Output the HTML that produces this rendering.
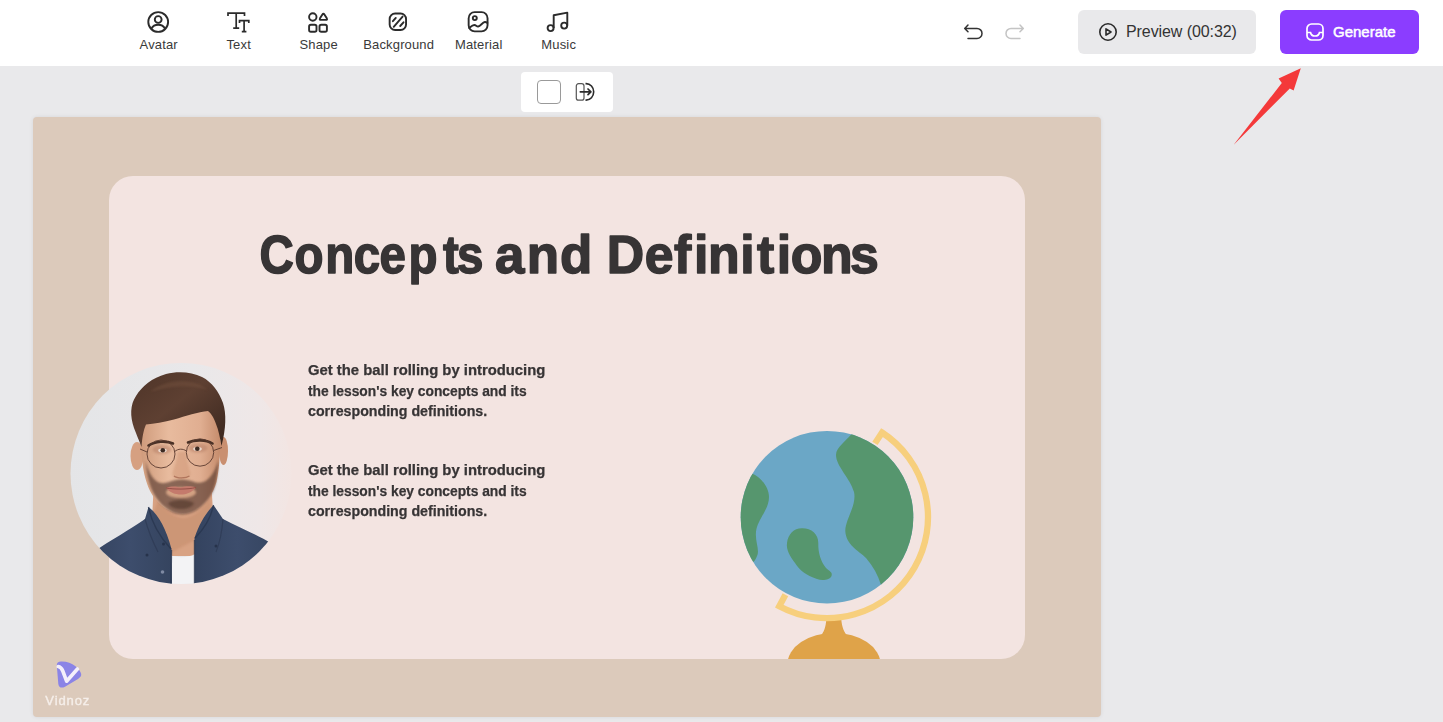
<!DOCTYPE html>
<html lang="en">
<head>
<meta charset="utf-8">
<title>Vidnoz Editor</title>
<style>
html,body{margin:0;padding:0;}
body{width:1443px;height:722px;overflow:hidden;background:#e9e9eb;font-family:"Liberation Sans",sans-serif;position:relative;color:#333;}
.abs{position:absolute;}
#topbar{left:0;top:0;width:1443px;height:66px;background:#fff;}
.tool{position:absolute;top:0;width:80px;height:66px;text-align:center;}
.tool svg{position:absolute;left:28px;top:10px;width:24px;height:24px;}
.tool span{position:absolute;left:-9.3px;width:100px;top:37px;font-size:13px;line-height:15px;color:#3a3a3a;text-align:center;letter-spacing:0.15px;}
#preview{left:1078px;top:10px;width:178px;height:44px;border-radius:6px;background:#e9e9eb;}
#preview span{position:absolute;left:48px;top:11px;font-size:16px;line-height:22px;color:#333;white-space:nowrap;letter-spacing:-0.08px;}
#generate{left:1280px;top:10px;width:139px;height:44px;border-radius:6px;background:#8b3dff;}
#generate span{position:absolute;left:53px;top:11px;font-size:15px;line-height:22px;color:#fff;white-space:nowrap;-webkit-text-stroke:0.5px #fff;}
#popup{left:521px;top:72px;width:92px;height:40px;border-radius:4px;background:#fff;}
#sq{left:16px;top:8px;width:22px;height:22px;border:1px solid #9a9a9a;border-radius:4px;background:#fff;}
#canvas{left:33px;top:117px;width:1068px;height:600px;border-radius:4px;background:#dccabb;box-shadow:0 0 4px rgba(0,0,0,0.08);overflow:hidden;}
#card{left:76px;top:59px;width:916px;height:483px;border-radius:24px;background:#f3e4e1;}
.ttl{font-family:"Liberation Sans",sans-serif;font-weight:bold;font-size:54px;fill:#373435;stroke:#373435;stroke-width:1.5px;stroke-linejoin:round;}
.pl{left:275px;font-weight:bold;font-size:14px;line-height:18px;color:#373435;white-space:nowrap;transform-origin:0 0;-webkit-text-stroke:0.25px #373435;}
</style>
</head>
<body>
<div id="topbar" class="abs">
  <div class="tool" style="left:118px"><svg viewBox="0 0 24 24" fill="none" stroke="#2b2b2b" stroke-width="1.900"><circle cx="12.200" cy="12" r="9.900"/><circle cx="12.200" cy="9.500" r="3.400"/><path d="M5.300 18.700c1.500-2.700 3.900-3.900 6.900-3.900s5.400 1.200 6.900 3.900"/></svg><span>Avatar</span></div>
  <div class="tool" style="left:198px"><svg viewBox="0 0 24 24" fill="none" stroke="#2b2b2b" stroke-width="1.700"><path d="M2 6V3.200h16.500V6M10.200 3.200v15M7.200 18.200h6M13.500 13V10.700h9.300V13M18.100 10.700v11M15.800 21.700h4.600"/></svg><span>Text</span></div>
  <div class="tool" style="left:278px"><svg viewBox="0 0 24 24" fill="none" stroke="#2b2b2b" stroke-width="1.900"><circle cx="6.800" cy="7" r="3.700"/><path d="M16.400 4.500Q17.400 2.900 18.400 4.500L20.800 8.300Q21.600 9.900 19.900 9.900L14.900 9.900Q13.200 9.900 14 8.300Z" stroke-linejoin="round"/><rect x="3.100" y="14.800" width="7.400" height="7" rx="1.800"/><rect x="13.500" y="14.800" width="7.400" height="7" rx="1.800"/></svg><span>Shape</span></div>
  <div class="tool" style="left:358px"><svg viewBox="0 0 24 24" fill="none" stroke="#2b2b2b" stroke-width="1.900"><rect x="3.650" y="3.450" width="16.400" height="16.600" rx="5.500"/><path d="M6.900 11.200L9.800 7.900M7.700 16.800L16.600 6.600M14.200 16L17.500 12.300" stroke-linecap="round" stroke-width="1.900"/></svg><span>Background</span></div>
  <div class="tool" style="left:438px"><svg viewBox="0 0 24 24" fill="none" stroke="#2b2b2b" stroke-width="1.900"><rect x="2.650" y="2.150" width="18.900" height="19.200" rx="6"/><circle cx="8.800" cy="8.100" r="2"/><path d="M3.200 18C5 16.500 7 14.600 8.600 15C10 15.300 10.800 16.700 12.200 16.500C14.500 16.200 16.500 12.300 18.800 12C19.800 11.900 20.600 12.300 21.400 12.900" stroke-linecap="round"/></svg><span>Material</span></div>
  <div class="tool" style="left:518px"><svg viewBox="0 0 24 24" fill="none" stroke="#2b2b2b" stroke-width="1.900"><circle cx="4.600" cy="18.100" r="3"/><circle cx="18.200" cy="15.600" r="3"/><path d="M7.700 18.100V5.200l13.600-2.600v13" stroke-linejoin="round"/></svg><span>Music</span></div>

  <svg class="abs" style="left:962px;top:20px;width:24px;height:24px" viewBox="0 0 24 24" fill="none" stroke="#333" stroke-width="1.500" stroke-linecap="round" stroke-linejoin="round"><path d="M6 5L2.700 8.400l3.300 3.400M2.700 8.400H15a5 5 0 0 1 0 10H6"/></svg>
  <svg class="abs" style="left:1002px;top:20px;width:24px;height:24px" viewBox="0 0 24 24" fill="none" stroke="#c4c4c4" stroke-width="1.500" stroke-linecap="round" stroke-linejoin="round"><path d="M18 5L21.300 8.400l-3.300 3.400M21.300 8.400H9a5 5 0 0 0 0 10h9"/></svg>

  <div id="preview" class="abs"><svg class="abs" style="left:20px;top:12px;width:20px;height:20px" viewBox="0 0 20 20" fill="none" stroke="#2b2b2b" stroke-width="1.600"><circle cx="10" cy="10" r="8.200"/><path d="M8 6.800v6.400l5-3.200z" stroke-linejoin="round"/></svg><span>Preview (00:32)</span></div>
  <div id="generate" class="abs"><svg class="abs" style="left:26px;top:13px;width:18px;height:18px" viewBox="0 0 18 18" fill="none" stroke="#fff" stroke-width="1.700"><rect x="1" y="1" width="16" height="16" rx="4.500"/><path d="M1 9.500h3.500c.5 2.500 2 3.500 4.500 3.500s4-1 4.500-3.500H17"/></svg><span>Generate</span></div>
</div>

<svg class="abs" style="left:1220px;top:60px;width:100px;height:100px" viewBox="1220 60 100 100"><path d="M1300.800 68.300L1278.600 78.400L1281.800 83L1233.500 145L1289.800 88.400L1293.600 90.600Z" fill="#f4393a"/></svg>

<div id="popup" class="abs">
  <div id="sq" class="abs"></div>
  <svg class="abs" style="left:52px;top:8px;width:24px;height:24px" viewBox="0 0 24 24" fill="none" stroke="#2b2b2b" stroke-width="1.500"><rect x="3.300" y="3.700" width="7.700" height="16.500" rx="2.300" stroke="#555" stroke-width="1.200"/><path d="M12.500 3.600h.6a7.600 8.250 0 0 1 0 16.500h-.6" stroke-width="1.600"/><path d="M7.300 11.850h10M15 9l2.900 2.850-2.900 2.850" stroke-width="1.700" stroke-linecap="round" stroke-linejoin="round"/></svg>
</div>

<div id="canvas" class="abs">
  <div id="card" class="abs"></div>
  <div class="pl abs" id="p1" style="top:244.3px;transform:scaleX(1.0595)">Get the ball rolling by introducing</div>
  <div class="pl abs" id="p2" style="top:264.8px;transform:scaleX(0.985)">the lesson's key concepts and its</div>
  <div class="pl abs" id="p3" style="top:285.2px;transform:scaleX(1.015)">corresponding definitions.</div>
  <div class="pl abs" id="p4" style="top:344.3px;transform:scaleX(1.0595)">Get the ball rolling by introducing</div>
  <div class="pl abs" id="p5" style="top:364.8px;transform:scaleX(0.985)">the lesson's key concepts and its</div>
  <div class="pl abs" id="p6" style="top:385.2px;transform:scaleX(1.015)">corresponding definitions.</div>
<svg class="abs" style="left:0;top:0;width:1068px;height:600px" viewBox="33 117 1068 600">
<defs>
<clipPath id="av"><circle cx="181" cy="473.5" r="110.5"/></clipPath>
<clipPath id="gl"><circle cx="827" cy="517.2" r="86.3"/></clipPath>
<clipPath id="cc"><rect x="109" y="176" width="916" height="483" rx="24"/></clipPath>
<linearGradient id="avbg" x1="0" x2="1" y1="0" y2="0"><stop offset="0" stop-color="#e4e5e7"/><stop offset="0.55" stop-color="#e9e8ea"/><stop offset="0.85" stop-color="#efe7e7"/><stop offset="1" stop-color="#f3e5e2"/></linearGradient>
<linearGradient id="hair" x1="0" x2="1" y1="0" y2="1"><stop offset="0" stop-color="#4e3428"/><stop offset="0.45" stop-color="#5e4032"/><stop offset="1" stop-color="#38251d"/></linearGradient>
<linearGradient id="skin" x1="0" x2="1" y1="0" y2="0"><stop offset="0" stop-color="#cf9b7c"/><stop offset="0.35" stop-color="#e8bb9e"/><stop offset="0.75" stop-color="#e0ae91"/><stop offset="1" stop-color="#c58c6c"/></linearGradient>
<linearGradient id="shirt" x1="0" x2="1" y1="0" y2="0"><stop offset="0" stop-color="#34435f"/><stop offset="0.5" stop-color="#3d4d6c"/><stop offset="1" stop-color="#35445f"/></linearGradient>
<filter id="bl1" x="-20%" y="-20%" width="140%" height="140%"><feGaussianBlur stdDeviation="1.2"/></filter>
<filter id="bl2" x="-20%" y="-20%" width="140%" height="140%"><feGaussianBlur stdDeviation="0.5"/></filter>
</defs>
<g clip-path="url(#av)">
<rect x="68" y="360" width="226" height="226" fill="url(#avbg)"/>
<!-- neck -->
<path d="M154 480 L152 520 C158 540 168 552 172 556 L195 556 L196 538 C204 528 210 520 213 512 L211 478 Z" fill="#d8a283"/>
<path d="M158 500 C166 512 176 518 184 518 C194 517 204 508 210 498 L212 514 C206 524 198 534 195 540 L172 552 C164 540 156 528 152 518 Z" fill="#c48c6c" opacity="0.55" filter="url(#bl1)"/>
<!-- tee -->
<path d="M169.500 555 C178 558 188 558 195 554 L195 590 L169.500 590 Z" fill="#f3f3f5"/>
<!-- shirt -->
<path d="M94 552 C110 540 130 530 145 519 L148.500 507 C158 514 166 528 171.500 549 L172 590 L88 590 Z" fill="url(#shirt)"/>
<path d="M194.500 590 L194.500 538 C199 524 206 513 213.500 505 L223 519 C240 528 258 535 272 544 L280 590 Z" fill="url(#shirt)"/>
<path d="M148.500 507 C151 520 158 535 171 549 M213.500 505 C211 518 203 530 195 538 M194.500 540 L194.500 590 M171.500 550 L171 590" stroke="#27334b" stroke-width="1.400" fill="none" opacity="0.7"/>
<path d="M145 519 C148 530 152 540 158 552 M223 519 C222 532 220 542 216 552" stroke="#2b3750" stroke-width="1.200" fill="none" opacity="0.6"/>
<circle cx="163.500" cy="544" r="1.500" fill="#27334b"/><circle cx="216" cy="546" r="1.500" fill="#27334b"/><circle cx="162.500" cy="572" r="1.800" fill="#7f8aa3"/><circle cx="147" cy="555" r="1.500" fill="#27334b"/>
<!-- ears -->
<ellipse cx="137" cy="456" rx="6.500" ry="14" fill="#d6a081"/>
<ellipse cx="223.500" cy="451" rx="4.500" ry="14" fill="#c98f70"/>
<!-- face -->
<path d="M141.500 420 C140 448 142 468 146.500 482 C151 497 161 508 174 512.500 C180 514.500 186 514.500 192 512 C204 507 212.500 496 216.500 482 C219.500 468 221 448 220 420 C212 400 150 400 141.500 420 Z" fill="url(#skin)"/>
<!-- beard -->
<path d="M145.500 461 C146.500 472 148.500 482 152 490 C157 501 165 509 174 513 C180 515 186 515 192 512.500 C201 508.500 209 500 213.500 490 C216.500 482 218 472 218.500 460 C216 468 213 475 207 480 C203 483 198 483.500 193 481.500 C188 480 184 479.500 181 479.500 C177 479.500 173 480.500 169 482 C164 484 159 483.500 155 480 C150 475 147.500 468 145.500 461 Z" fill="#55392d" opacity="0.64" filter="url(#bl1)"/>
<ellipse cx="181" cy="492.500" rx="15" ry="5.500" fill="#dba888" opacity="0.9" filter="url(#bl1)"/>
<path d="M168 503 C174 499 188 499 194 503 C191 511 171 511 168 503 Z" fill="#4a3027" opacity="0.55" filter="url(#bl1)"/>
<path d="M166 488 C172 485.500 176 486.500 180.500 487.500 C185 486.500 190 485.500 196 487.500 C191 493 186 494.500 181 494.500 C175 494.500 170 492.500 166 488 Z" fill="#c47a6c"/>
<path d="M166 488 C174 489.500 188 489.500 196 487.500" stroke="#8e4a42" stroke-width="0.900" fill="none"/>
<!-- nose -->
<path d="M178 452 C177 462 173 470 172.500 474 C173 478 178 479 181.500 478.500 C186 479 190 477.500 190.500 474 C189 468 186 460 186 452 Z" fill="#cf9676" opacity="0.5" filter="url(#bl1)"/>
<path d="M174 476 C177 478.500 186 478.500 189.500 476" stroke="#a86a52" stroke-width="1.200" fill="none" opacity="0.8"/>
<!-- hair -->
<path d="M141.500 447 C139 440 137 436 134 428 C130 416 130 405 136 396 C142 386 152 378 166 374 C178 371 192 372 202 377 C212 382 219 392 223 403 C226.500 414 226 428 221.500 446 C220 438 218.500 430 216 424 C214 418 211 413 208 411 C198 412 186 416 174 419.500 C164 422 154 424 146 424.500 C143.500 430 142 438 141.500 447 Z" fill="url(#hair)"/>
<path d="M150 392 C165 380 190 376 208 390 C192 384 168 386 150 392 Z" fill="#76533f" opacity="0.45" filter="url(#bl1)"/>
<!-- brows eyes -->
<ellipse cx="162" cy="449.500" rx="9.500" ry="4.500" fill="#a8705a" opacity="0.4" filter="url(#bl1)"/><ellipse cx="198" cy="448" rx="9.500" ry="4.500" fill="#a8705a" opacity="0.4" filter="url(#bl1)"/>
<path d="M148.500 445.500 C155 441 166 440.500 173 443.500" stroke="#4a3126" stroke-width="2.600" fill="none" stroke-linecap="round"/>
<path d="M188 442.500 C195 439.500 206 439.500 212.500 443.500" stroke="#4a3126" stroke-width="2.600" fill="none" stroke-linecap="round"/>
<ellipse cx="162.500" cy="450.500" rx="4.300" ry="1.900" fill="#e9d6cb"/><ellipse cx="197.500" cy="449" rx="4.300" ry="1.900" fill="#e9d6cb"/>
<circle cx="162.800" cy="450.300" r="2.300" fill="#3c2a22"/><circle cx="197.300" cy="448.800" r="2.300" fill="#3c2a22"/>
<!-- glasses -->
<circle cx="161" cy="454" r="14" stroke="#5b3b30" stroke-width="0.900" fill="none"/><circle cx="200" cy="452.500" r="13.700" stroke="#5b3b30" stroke-width="0.900" fill="none"/>
<path d="M174.800 451.500 C178 448.500 183 448.500 186.400 451 M147 452 L140 449 M213.700 450.500 L222 447.500" stroke="#5b3b30" stroke-width="0.900" fill="none"/>
</g>
<!-- globe -->
<g clip-path="url(#cc)">
<ellipse cx="834" cy="664" rx="46.500" ry="31" fill="#dfa349"/>
<path d="M826.600 616 L841 616 C841.500 625 843 630 846.500 635 L821.500 635 C825 630 826 625 826.600 616 Z" fill="#dfa349"/>
</g>
<path d="M874.93 443.40 L882.01 432.49 A101.0 101.0 0 0 1 914.47 567.70 A101.0 101.0 0 0 1 779.27 606.21 L785.42 594.75" stroke="#f7cf7d" stroke-width="6.300" fill="none" stroke-linejoin="miter"/>
<circle cx="827" cy="517.200" r="86.300" fill="#6ba7c6"/>
<g clip-path="url(#gl)" fill="#56966e">
<path d="M856 428 C849 440 836 446 836 455 C836 466 850 478 854 492 C857 505 845 520 845.300 531 C846 545 858 550 866 558 C873 566 878 575 881 585 L930 585 L930 428 Z"/>
<path d="M735 472 L752 473.600 C762 478 769 488 769 497 C769 510 757 520 756 532 C755 542 760 550 757 556 C756 559 754 562 751 564 L735 564 Z"/>
<path d="M801.700 528.300 C811 528 818.500 534 818.300 543 C818 553 821 562 826 568 C829 571 833 572 831.500 576 C830 580 822 581 817 579 C806 575 800 571 795 563 C790 556 786 550 787 543 C788 534 794 528.500 801.700 528.300 Z"/>
</g>
<!-- title -->
<text class="ttl" transform="scale(0.88,1)" y="273" x="294.8 334.7 369.6 402.0 431.3 464.2 503.4 519.4">Concepts</text>
<text class="ttl" transform="scale(0.98,1)" y="273" x="505.2 537.5 571.5">and</text>
<text class="ttl" transform="scale(0.96,1)" y="273" x="632.0 671.7 702.1 722.9 737.5 771.0 788.5 809.0 823.7 855.1 885.3">Definitions</text>
<!-- logo -->
<path d="M56.800 665.500 C56.600 662.800 58.300 661.600 61 661.500 C66.500 661.300 71.500 662.800 75.500 666.200 C78.800 669 80.700 671.500 81.200 674 C81.500 676 80.200 677.600 78 678.900 L65 686.700 C61.500 688.600 58.800 687.500 58.300 684 Z" fill="#8b84e6"/>
<path d="M58.200 666.500 C60.500 666.800 61.800 668.500 62.800 671 L66.600 681.200 L77.400 669" stroke="#f4effb" stroke-width="3.600" fill="none" stroke-linecap="round" stroke-linejoin="round"/>
<text x="45.300" y="705.200" font-family="Liberation Sans, sans-serif" font-size="13" letter-spacing="0.9" fill="#f8f2ee" stroke="#f8f2ee" stroke-width="0.35" opacity="0.92">Vidnoz</text>
</svg>
</div>
</body>
</html>
